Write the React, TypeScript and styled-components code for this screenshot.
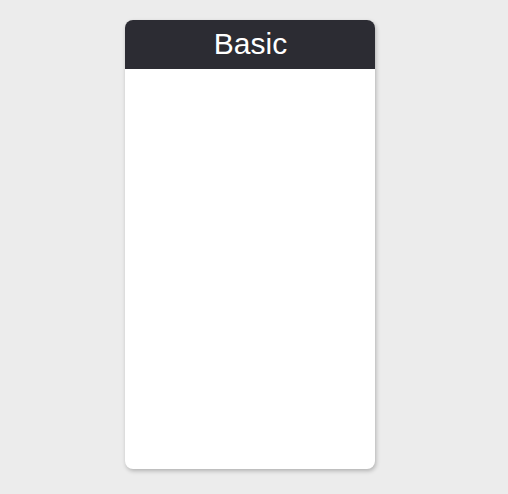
import styled, { createGlobalStyle } from 'styled-components';

const GlobalStyle = createGlobalStyle`
  html, body {
    margin: 0;
    padding: 0;
    background: #ececec;
    font-family: "Liberation Sans", Arial, sans-serif;
  }
`;

const Page = styled.div`
  width: 508px;
  height: 494px;
  display: flex;
  justify-content: flex-start;
  padding: 20px 0 0 125px;
  box-sizing: border-box;
`;

const Card = styled.div`
  width: 250px;
  height: 449px;
  background: #ffffff;
  border-radius: 8px;
  overflow: hidden;
  box-shadow: 1px 2px 4px rgba(0, 0, 0, 0.25);
  display: flex;
  flex-direction: column;
`;

const Header = styled.div`
  height: 49px;
  background: #2c2c33;
  color: #ffffff;
  font-size: 30px;
  display: flex;
  align-items: center;
  justify-content: center;
  padding: 0 0 1px 1px;
  box-sizing: border-box;
`;

const App = () => (
  <>
    <GlobalStyle />
    <Page>
      <Card>
        <Header>Basic</Header>
      </Card>
    </Page>
  </>
);

export default App;
